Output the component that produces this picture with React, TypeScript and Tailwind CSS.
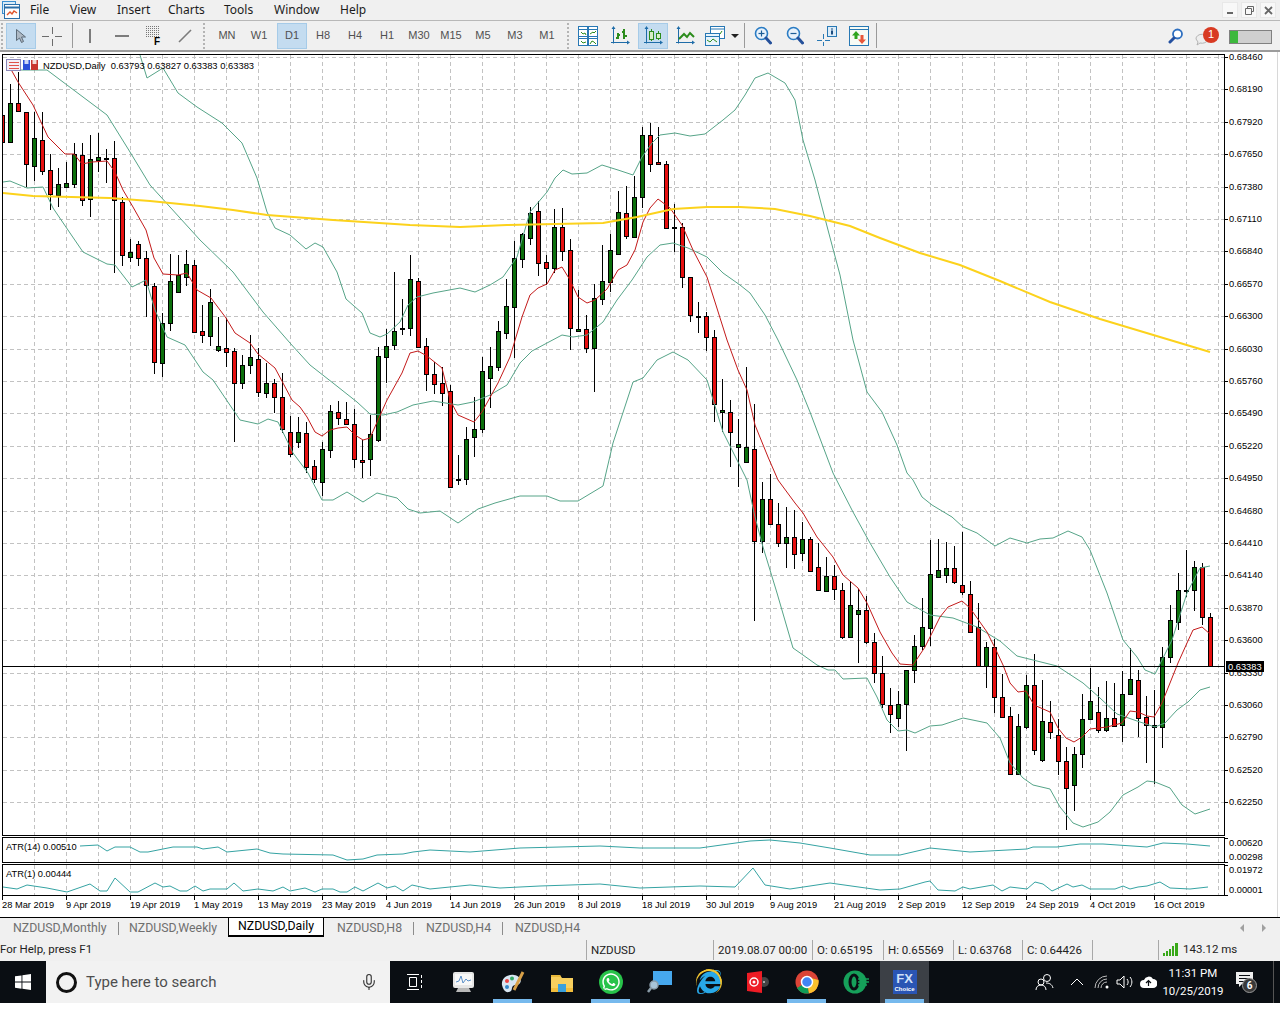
import { FaInternetExplorer, FaWhatsapp } from "react-icons/fa";
import { Mic } from "lucide-react";

type Candle = [number, "r" | "g", number, number, number, number];

// x, colour, high, body top, body bottom, low (page pixels)
const candles: Candle[] = [
  [2, "r", 100, 115, 142, 148], [10, "g", 84, 103, 142, 143], [18, "r", 72, 103, 111, 111], [26, "r", 112, 112, 164, 187],
  [34, "g", 112, 138, 166, 181], [42, "r", 112, 140, 171, 175], [50, "r", 154, 170, 194, 210], [58, "g", 168, 184, 195, 207],
  [66, "g", 162, 183, 187, 188], [74, "g", 143, 154, 184, 188], [82, "r", 143, 155, 200, 206], [90, "g", 135, 159, 199, 217],
  [98, "g", 133, 157, 160, 172], [106, "r", 149, 158, 159, 183], [114, "r", 141, 158, 200, 273], [122, "r", 197, 202, 255, 266],
  [130, "g", 239, 252, 257, 262], [138, "r", 241, 244, 258, 266], [146, "r", 251, 258, 285, 317], [154, "r", 283, 286, 362, 374],
  [162, "g", 313, 323, 363, 377], [170, "g", 254, 281, 323, 331], [178, "g", 255, 275, 292, 292], [186, "g", 250, 264, 277, 286],
  [194, "r", 260, 265, 332, 333], [202, "r", 305, 331, 335, 343], [210, "g", 289, 302, 336, 346], [218, "g", 317, 346, 350, 352],
  [226, "r", 318, 348, 352, 367], [234, "r", 348, 351, 383, 442], [242, "g", 355, 365, 383, 389], [250, "g", 335, 357, 365, 374],
  [258, "r", 348, 359, 392, 397], [266, "g", 363, 383, 393, 398], [274, "r", 379, 383, 397, 413], [282, "r", 373, 397, 429, 433],
  [290, "r", 416, 432, 454, 457], [298, "g", 417, 432, 442, 448], [306, "r", 422, 433, 467, 473], [314, "r", 460, 466, 479, 483],
  [322, "g", 442, 449, 482, 496], [330, "g", 405, 411, 450, 458], [338, "r", 401, 412, 418, 425], [346, "r", 402, 419, 424, 425],
  [354, "r", 409, 424, 459, 468], [362, "r", 440, 460, 462, 478], [370, "g", 415, 434, 459, 476], [378, "g", 347, 356, 440, 442],
  [386, "g", 329, 346, 357, 383], [394, "g", 272, 331, 345, 350], [402, "g", 299, 328, 329, 335], [410, "g", 255, 279, 328, 336],
  [418, "r", 278, 281, 347, 347], [426, "r", 338, 346, 374, 391], [434, "r", 362, 374, 384, 394], [442, "r", 367, 383, 393, 406],
  [450, "r", 385, 391, 487, 488], [458, "g", 455, 479, 480, 485], [466, "g", 427, 439, 479, 485], [474, "g", 397, 429, 437, 457],
  [482, "g", 357, 371, 429, 433], [490, "g", 347, 366, 378, 408], [498, "g", 321, 331, 367, 371], [506, "g", 279, 306, 333, 339],
  [514, "g", 241, 258, 307, 358], [522, "g", 233, 234, 259, 268], [530, "g", 207, 213, 238, 245], [538, "r", 201, 211, 263, 276],
  [546, "r", 255, 262, 268, 285], [554, "g", 209, 227, 268, 273], [562, "r", 208, 227, 251, 261], [570, "r", 239, 250, 328, 350],
  [578, "g", 290, 329, 331, 332], [586, "r", 315, 329, 348, 353], [594, "g", 284, 298, 348, 392], [602, "g", 245, 281, 299, 305],
  [610, "g", 234, 250, 282, 292], [618, "g", 191, 212, 254, 254], [626, "r", 186, 213, 236, 239], [634, "g", 176, 197, 237, 238],
  [642, "g", 127, 135, 197, 208], [650, "r", 123, 135, 164, 172], [658, "r", 127, 162, 164, 165], [666, "r", 161, 164, 228, 229],
  [674, "g", 204, 227, 228, 252], [682, "r", 223, 227, 277, 288], [690, "r", 277, 277, 315, 322], [698, "g", 302, 316, 317, 333],
  [706, "r", 312, 316, 337, 351], [714, "r", 330, 337, 404, 422], [722, "g", 379, 410, 412, 432], [730, "r", 400, 412, 432, 467],
  [738, "g", 419, 444, 447, 487], [746, "g", 367, 447, 462, 463], [754, "r", 404, 449, 541, 621], [762, "g", 482, 499, 541, 553],
  [770, "r", 474, 499, 524, 524], [778, "r", 503, 524, 543, 547], [786, "g", 507, 537, 543, 568], [794, "r", 510, 537, 554, 569],
  [802, "g", 522, 539, 553, 561], [810, "r", 537, 539, 571, 572], [818, "r", 543, 567, 590, 590], [826, "g", 557, 576, 591, 591],
  [834, "r", 565, 576, 589, 600], [842, "r", 583, 590, 637, 639], [850, "g", 582, 605, 637, 637], [858, "g", 589, 610, 614, 663],
  [866, "r", 596, 610, 642, 644], [874, "r", 633, 642, 673, 683], [882, "r", 656, 673, 704, 708], [890, "r", 688, 705, 714, 733],
  [898, "g", 691, 704, 718, 727], [906, "g", 670, 670, 704, 751], [914, "g", 635, 646, 670, 683], [922, "g", 598, 627, 646, 650],
  [930, "g", 540, 574, 628, 646], [938, "g", 539, 570, 577, 577], [946, "g", 542, 568, 575, 583], [954, "r", 546, 568, 582, 584],
  [962, "r", 532, 585, 592, 595], [970, "r", 581, 594, 632, 632], [978, "r", 603, 627, 666, 667], [986, "g", 642, 647, 666, 688],
  [994, "r", 639, 647, 697, 713], [1002, "r", 674, 697, 717, 717], [1010, "r", 707, 716, 774, 774], [1018, "g", 714, 726, 774, 774],
  [1026, "g", 675, 685, 727, 729], [1034, "r", 654, 685, 750, 755], [1042, "g", 680, 721, 760, 762], [1050, "r", 701, 722, 732, 739],
  [1058, "r", 719, 735, 761, 775], [1066, "r", 747, 761, 788, 830], [1074, "g", 747, 754, 785, 811], [1082, "g", 694, 719, 754, 768],
  [1090, "g", 668, 701, 719, 719], [1098, "r", 687, 712, 730, 733], [1106, "g", 681, 718, 730, 732], [1114, "r", 683, 718, 726, 727],
  [1122, "g", 671, 694, 725, 742], [1130, "g", 648, 679, 694, 694], [1138, "r", 670, 680, 718, 737], [1146, "r", 696, 717, 725, 763],
  [1154, "g", 690, 725, 727, 784], [1162, "g", 647, 657, 727, 748], [1170, "g", 605, 620, 657, 663], [1178, "g", 573, 590, 622, 630],
  [1186, "g", 550, 590, 591, 597], [1194, "g", 561, 567, 590, 611], [1202, "r", 563, 567, 617, 625], [1210, "r", 613, 617, 666, 666],
];

const redMa = "9,66 13,73 18,82 33,105 48,137 65,154 74,154 82,164 92,162 107,161 115,172 123,190 133,207 146,230 154,258 163,274 178,275 187,273 197,290 211,298 226,318 235,333 250,343 258,354 275,368 283,383 292,400 300,407 307,417 315,432 322,436 330,430 338,428 347,427 355,435 363,440 370,438 378,420 387,400 402,373 410,353 418,351 427,356 442,368 450,400 458,415 474,422 482,412 498,383 510,357 522,317 530,295 538,288 547,284 555,270 562,267 570,280 578,297 587,303 595,300 607,289 618,270 627,265 635,250 643,222 650,208 658,199 670,208 682,225 693,250 707,277 715,302 727,340 738,370 747,390 755,425 768,457 778,480 795,503 803,513 817,537 833,557 843,575 858,588 867,603 880,632 892,653 900,664 913,665 925,647 940,617 948,607 962,601 970,608 987,632 995,648 1003,665 1010,683 1018,692 1026,691 1034,705 1050,712 1058,728 1066,738 1074,742 1082,737 1090,729 1107,727 1122,723 1130,711 1138,712 1147,716 1154,717 1162,703 1178,663 1187,643 1193,630 1202,627 1210,634";
const upperBand = "140,55 147,78 163,68 178,93 197,107 222,123 242,143 257,178 267,212 275,228 290,235 306,249 315,243 323,247 337,272 346,299 362,313 370,333 380,337 387,334 400,322 408,305 417,297 433,293 460,288 475,292 490,285 503,277 517,257 530,212 547,192 555,178 563,170 572,174 587,173 602,165 618,170 633,175 642,157 652,143 660,135 675,133 690,136 705,134 723,120 735,110 745,95 755,78 768,73 785,83 795,100 803,140 815,180 828,230 840,275 853,340 867,392 882,412 897,445 907,473 913,480 922,497 932,505 952,517 963,527 977,533 995,546 1010,538 1027,543 1040,539 1053,538 1068,531 1082,537 1090,550 1107,593 1123,640 1137,657 1145,670 1155,674 1163,658 1172,640 1187,593 1200,568 1210,566";
const midBand = "18,70 47,70 107,115 130,152 150,185 180,218 200,240 233,272 263,312 290,343 310,365 333,383 357,402 370,414 383,415 397,412 413,405 433,401 458,405 473,402 490,395 507,385 520,363 532,351 547,343 562,335 573,337 587,335 603,322 617,300 632,280 647,257 660,245 673,243 688,248 707,257 723,273 740,285 750,293 765,315 778,340 797,380 810,412 833,473 853,512 870,543 890,577 907,602 930,615 953,618 977,627 1000,641 1017,656 1033,660 1057,666 1083,683 1100,698 1117,714 1137,721 1155,727 1165,723 1177,710 1188,702 1200,690 1210,687";
const lowerBand = "3,182 10,181 27,188 43,187 53,208 70,233 83,252 107,264 115,265 132,287 146,280 155,310 167,337 185,345 203,372 213,380 240,420 258,424 268,419 278,422 293,453 308,473 322,500 333,500 347,492 363,502 377,493 397,498 408,509 420,513 440,511 458,523 478,509 495,503 520,496 547,496 560,501 578,501 603,486 613,443 633,382 643,378 657,360 673,352 688,360 707,380 723,432 738,462 747,480 755,517 763,547 777,593 793,648 803,655 817,665 828,670 835,670 843,679 867,678 877,697 887,720 898,731 907,730 915,733 930,726 942,725 963,718 987,723 1000,738 1010,763 1023,778 1033,785 1050,789 1060,807 1073,823 1083,827 1098,822 1110,812 1123,795 1138,787 1147,781 1155,782 1170,788 1182,805 1195,814 1210,809";
const ma200 = "3,193 33,196 110,198 150,201 200,206 233,210 267,215 333,220 410,225 460,227 507,225 603,223 637,217 673,209 707,207 740,207 775,209 810,216 850,226 880,238 920,253 960,265 1000,281 1050,302 1100,319 1150,334 1210,352";
const atr14 = "80,846 98,845 107,851 115,847 130,847 140,852 148,852 163,849 173,847 197,847 203,849 218,847 227,852 257,849 270,853 283,854 333,855 347,860 363,859 377,855 403,854 413,852 430,850 470,852 520,848 600,846 640,848 700,848 750,841 770,840 800,843 830,848 870,855 900,855 930,848 970,852 1027,849 1033,847 1057,847 1080,844 1103,844 1147,847 1163,843 1187,844 1210,846";
const atr1 = "3,887 17,889 27,885 47,888 67,892 90,884 100,891 107,891 115,878 130,892 138,892 155,883 163,887 170,886 180,891 187,891 195,886 203,891 210,889 227,889 234,883 243,891 258,889 273,891 283,887 290,891 305,888 315,892 322,889 333,889 340,892 347,892 355,887 363,891 378,883 387,888 395,886 403,891 412,885 430,889 470,885 500,888 540,886 600,884 640,888 700,886 735,887 753,868 765,885 790,889 830,883 880,890 900,889 925,882 930,881 938,890 955,891 963,887 970,889 993,885 1002,891 1010,887 1027,889 1035,882 1043,884 1052,891 1067,884 1073,887 1082,885 1090,889 1115,889 1123,886 1130,889 1138,887 1147,886 1160,882 1170,888 1190,889 1208,887";

const prices = ["0.68460", "0.68190", "0.67920", "0.67650", "0.67380", "0.67110", "0.66840", "0.66570", "0.66300", "0.66030", "0.65760", "0.65490", "0.65220", "0.64950", "0.64680", "0.64410", "0.64140", "0.63870", "0.63600", "0.63330", "0.63060", "0.62790", "0.62520", "0.62250"];
const dates = ["28 Mar 2019", "9 Apr 2019", "19 Apr 2019", "1 May 2019", "13 May 2019", "23 May 2019", "4 Jun 2019", "14 Jun 2019", "26 Jun 2019", "8 Jul 2019", "18 Jul 2019", "30 Jul 2019", "9 Aug 2019", "21 Aug 2019", "2 Sep 2019", "12 Sep 2019", "24 Sep 2019", "4 Oct 2019", "16 Oct 2019"];
const gridX = Array.from({ length: 38 }, (_, i) => 34 + i * 32);

const chartFont = "font-['Liberation_Sans',sans-serif]";
const uiFont = "font-['Noto_Sans',sans-serif]";
const barFont = "font-['Roboto',sans-serif]";

function ChartSvg() {
  return (
    <svg width={1280} height={865} viewBox="0 52 1280 865" className={`block ${chartFont}`}>
      <defs>
        <clipPath id="main"><rect x={3} y={55} width={1221} height={780} /></clipPath>
      </defs>
      <g stroke="#c2c2c2" strokeDasharray="4 3" shapeRendering="crispEdges">
        {gridX.map((x) => (
          <g key={x}>
            <line x1={x + 0.5} x2={x + 0.5} y1={55} y2={835} />
            <line x1={x + 0.5} x2={x + 0.5} y1={838} y2={862} />
            <line x1={x + 0.5} x2={x + 0.5} y1={865} y2={895} />
          </g>
        ))}
        {prices.map((p, i) => {
          const y = Math.round(57 + i * 32.4) + 0.5;
          return <line key={p} x1={3} x2={1224} y1={y} y2={y} />;
        })}
      </g>

      <g clipPath="url(#main)">
        {candles.map(([x, c, h, t, b, l]) => (
          <g key={x} shapeRendering="crispEdges">
            <line x1={x + 0.5} x2={x + 0.5} y1={h} y2={l} stroke="#000" />
            <rect
              x={x - 1.5}
              y={t + 0.5}
              width={4}
              height={Math.max(b - t, 1)}
              fill={c === "r" ? "#e60f0f" : "#0b6f0b"}
              stroke="#000"
            />
          </g>
        ))}
        <polyline points={upperBand} fill="none" stroke="#56a488" />
        <polyline points={midBand} fill="none" stroke="#56a488" />
        <polyline points={lowerBand} fill="none" stroke="#56a488" />
        <polyline points={redMa} fill="none" stroke="#c31a1a" />
        <polyline points={ma200} fill="none" stroke="#fcd21c" strokeWidth={2} />
      </g>

      <g shapeRendering="crispEdges" stroke="#000" fill="none">
        <line x1={3} x2={1224} y1={666.5} y2={666.5} />
        <rect x={2.5} y={54.5} width={1222} height={781} />
        <rect x={2.5} y={837.5} width={1222} height={25} />
        <rect x={2.5} y={864.5} width={1222} height={31} />
        {prices.map((p, i) => {
          const y = Math.round(57 + i * 32.4) + 0.5;
          return <line key={p} x1={1224} x2={1228} y1={y} y2={y} />;
        })}
        <line x1={1224} x2={1228} y1={838.5} y2={838.5} />
        <line x1={1224} x2={1228} y1={862.5} y2={862.5} />
        <line x1={1224} x2={1228} y1={865.5} y2={865.5} />
        <line x1={1224} x2={1228} y1={895.5} y2={895.5} />
        {dates.map((d, i) => (
          <line key={d} x1={2.5 + i * 64} x2={2.5 + i * 64} y1={896} y2={900} />
        ))}
      </g>

      <polyline points={atr14} fill="none" stroke="#35a3a3" />
      <polyline points={atr1} fill="none" stroke="#35a3a3" />

      <g fontSize={9.3} fill="#000">
        {prices.map((p, i) => (
          <text key={p} x={1229} y={Math.round(57 + i * 32.4) + 2.5}>{p}</text>
        ))}
        <text x={1229} y={845.5}>0.00620</text>
        <text x={1229} y={859.5}>0.00298</text>
        <text x={1229} y={872.5}>0.01972</text>
        <text x={1229} y={892.5}>0.00001</text>
        {dates.map((d, i) => (
          <text key={d} x={2 + i * 64} y={907.5}>{d}</text>
        ))}
        <text x={6} y={850}>ATR(14) 0.00510</text>
        <text x={6} y={877}>ATR(1) 0.00444</text>
        <text x={43} y={69} fontSize={9.4}>NZDUSD,Daily&#160;&#160;0.63793 0.63827 0.63383 0.63383</text>
      </g>

      <rect x={1226} y={661} width={38} height={11} fill="#000" />
      <text x={1228} y={670} fontSize={9.3} fill="#fff">0.63383</text>

      <rect x={6.5} y={59.5} width={14} height={11} fill="#f3eef4" stroke="#8a88b8" />
      <g stroke="#e0524a" shapeRendering="crispEdges">
        <line x1={9} x2={19} y1={62.5} y2={62.5} />
        <line x1={9} x2={19} y1={65.5} y2={65.5} />
        <line x1={9} x2={19} y1={68.5} y2={68.5} />
      </g>
      <rect x={23} y={60} width={7} height={10} fill="#2c50d8" />
      <rect x={24.5} y={60} width={4} height={4} fill="#cfd8f5" />
      <rect x={31} y={60} width={7} height={10} fill="#c8362e" />
      <rect x={32.5} y={60} width={4} height={4} fill="#f3dcd8" />

      <line x1={1277.5} x2={1277.5} y1={52} y2={917} stroke="#d8d8d8" />
    </svg>
  );
}

function Gripper() {
  return <div className="h-[26px] w-[4px] mx-[1px] border-l-2 border-dotted border-[#b4b4b4]" />;
}

function Sep() {
  return <div className="h-[25px] w-px bg-[#9a9a9a]" />;
}

function ToolBtn({ active, children, className = "" }: { active?: boolean; children: React.ReactNode; className?: string }) {
  return (
    <div
      className={`flex h-[26px] items-center justify-center ${active ? "border border-[#a6cbe8] bg-[#c4dcf0]" : ""} ${className}`}
    >
      {children}
    </div>
  );
}

const Axes = () => (
  <g stroke="#1e6ca8" fill="#1e6ca8" strokeWidth={1}>
    <line x1={3.5} x2={3.5} y1={2} y2={17.5} />
    <line x1={1} x2={19} y1={16.5} y2={16.5} />
    <path d="M3.5 0l-2 3h4z M20 16.5l-3-2v4z" stroke="none" />
  </g>
);

function GridIcon() {
  return (
    <svg width={20} height={20}>
      <rect x={0.5} y={0.5} width={19} height={19} fill="#fff" stroke="#2878b4" />
      <path d="M0 3.5h20M0 10.5h20M0 12.5h20M9.5 0v20M10.5 0v20" stroke="#2878b4" fill="none" />
      <path d="M3 6l2 2 2-1 1 2M12 8l3-2 1 1 2-2M3 15l2 2 3-1M12 18l2-3 2 1 2 2" stroke="#2c8c1c" fill="none" />
    </svg>
  );
}

function BarsIcon() {
  return (
    <svg width={20} height={20}>
      <Axes />
      <path d="M8 7v6M6 12h2M8 9h2M14 3v10M12 6h2M14 10h3" stroke="#2c8c1c" strokeWidth={2} fill="none" />
    </svg>
  );
}

function CandlesIcon() {
  return (
    <svg width={20} height={20}>
      <Axes />
      <path d="M8.5 3v12M15.5 5v9" stroke="#2c8c1c" />
      <rect x={6.5} y={5.5} width={4} height={8} fill="#d8ecc8" stroke="#2c8c1c" />
      <rect x={13.5} y={7.5} width={4} height={5} fill="#d8ecc8" stroke="#2c8c1c" />
    </svg>
  );
}

function LineIcon() {
  return (
    <svg width={20} height={20}>
      <Axes />
      <polyline points="4,13 9,8 12,11 15,7 19,11" stroke="#2c8c1c" strokeWidth={2} fill="none" />
    </svg>
  );
}

function TemplatesIcon() {
  return (
    <svg width={20} height={20}>
      <rect x={5.5} y={0.5} width={14} height={12} fill="#fff" stroke="#2878b4" />
      <path d="M5 3h15" stroke="#2878b4" />
      <path d="M12 9l3-1 2-3" stroke="#2c8c1c" fill="none" />
      <rect x={0.5} y={7.5} width={14} height={12} fill="#e8f4fc" stroke="#2878b4" />
      <path d="M0 10.5h15" stroke="#2878b4" />
      <path d="M2 14l3 2 3-3 4 3" stroke="#2c8c1c" fill="none" />
    </svg>
  );
}

function ZoomIcon({ plus }: { plus?: boolean }) {
  return (
    <svg width={18} height={20}>
      <circle cx={7.5} cy={7.5} r={6} fill="#e8f2fb" stroke="#2a7cc4" strokeWidth={1.6} />
      <path d="M4.5 7.5h6" stroke="#1d5d96" strokeWidth={1.2} />
      {plus && <path d="M7.5 4.5v6" stroke="#1d5d96" strokeWidth={1.2} />}
      <path d="M12 12l4.5 5" stroke="#24509a" strokeWidth={3} strokeLinecap="round" />
    </svg>
  );
}

function CrossInfoIcon() {
  return (
    <svg width={20} height={20}>
      <path d="M0 14.5h5M8 14.5h5M6.5 8v5M6.5 16v4" stroke="#2878b4" />
      <rect x={10.5} y={0.5} width={9} height={10} fill="#dcecf8" stroke="#2878b4" />
      <path d="M15 2.5v1M15 4.5v4" stroke="#1d4d80" strokeWidth={2} />
    </svg>
  );
}

function ArrowsIcon() {
  return (
    <svg width={20} height={20}>
      <rect x={0.5} y={0.5} width={19} height={19} fill="#f7fbf5" stroke="#2878b4" />
      <path d="M0 3.5h20" stroke="#2878b4" />
      <path d="M7 5l4 4.5H8.5V13h-3V9.5H3z" fill="#2fa51e" />
      <path d="M13 18l-4-4.5h2.5V9h3v4.500H17z" fill="#e8573a" />
    </svg>
  );
}

function Toolbar() {
  const frames = ["MN", "W1", "D1", "H8", "H4", "H1", "M30", "M15", "M5", "M3", "M1"];
  return (
    <div className="flex h-[32px] items-center border-t border-b-2 border-t-[#b8b8b8] border-b-[#9c9c9c] bg-[#f0f0f0]">
      <Gripper />
      <ToolBtn active className="w-[30px]">
        <svg width={14} height={16}><path d="M2.500 1.500v11l3-2.500 2 4.500 2-1-2-4.500h4z" fill="#aeb9c4" stroke="#5d6b78" /></svg>
      </ToolBtn>
      <ToolBtn className="w-[32px]">
        <svg width={20} height={20}><path d="M0 10.500h7M13 10.500h7M10.500 1v7M10.500 13v7" stroke="#6c6c6c" /></svg>
      </ToolBtn>
      <div className="ml-[4px] mr-[1px]"><Sep /></div>
      <ToolBtn className="w-[32px]"><div className="h-[14px] w-[2px] bg-[#7c7c7c]" /></ToolBtn>
      <ToolBtn className="w-[32px]"><div className="h-[2px] w-[14px] bg-[#7c7c7c]" /></ToolBtn>
      <ToolBtn className="w-[30px]">
        <div className="relative h-[20px] w-[14px]">
          <svg width={14} height={12} className="absolute left-0 top-0">
            <g stroke="#777" strokeDasharray="1 1">
              <path d="M0 .5h14M0 2.500h14M0 4.500h14M0 6.500h14M0 8.500h14M0 10.500h14" />
            </g>
          </svg>
          <span className="absolute bottom-0 right-0 font-['Liberation_Sans',sans-serif] text-[10px] leading-[9px] font-bold text-black">F</span>
        </div>
      </ToolBtn>
      <ToolBtn className="w-[34px]">
        <svg width={14} height={14}><path d="M1 13L13 1" stroke="#7c7c7c" strokeWidth={1.6} /></svg>
      </ToolBtn>
      <Gripper />
      <div className={`ml-[3px] flex text-[11px] text-[#505050] ${chartFont}`}>
        {frames.map((f) => (
          <ToolBtn key={f} active={f === "D1"} className={f === "D1" ? "ml-[2px] w-[30px]" : "w-[32px]"}>{f}</ToolBtn>
        ))}
      </div>
      <div className="ml-[3px]"><Gripper /></div>
      <ToolBtn className="w-[32px]"><GridIcon /></ToolBtn>
      <ToolBtn className="w-[32px]"><BarsIcon /></ToolBtn>
      <ToolBtn active className="ml-[2px] w-[30px]"><CandlesIcon /></ToolBtn>
      <ToolBtn className="ml-[1px] w-[32px]"><LineIcon /></ToolBtn>
      <ToolBtn className="w-[28px]"><TemplatesIcon /></ToolBtn>
      <div className="ml-[2px] mr-[5px] h-0 w-0 border-x-[4px] border-t-[4px] border-x-transparent border-t-[#222]" />
      <Sep />
      <ToolBtn className="ml-[1px] w-[33px]"><ZoomIcon plus /></ToolBtn>
      <ToolBtn className="w-[32px]"><ZoomIcon /></ToolBtn>
      <ToolBtn className="w-[32px]"><CrossInfoIcon /></ToolBtn>
      <ToolBtn className="w-[32px]"><ArrowsIcon /></ToolBtn>
      <div className="ml-px"><Sep /></div>
      <div className="ml-auto mr-[8px] flex items-center">
        <svg width={16} height={16} className="mr-[7px]">
          <circle cx={9.5} cy={6} r={4.500} fill="#fff" stroke="#2d6fc0" strokeWidth={1.8} />
          <path d="M6 10l-4 4" stroke="#2450a0" strokeWidth={3} strokeLinecap="round" />
        </svg>
        <div className="relative mr-[18px] h-[20px] w-[20px]">
          <svg width={14} height={14} className="absolute left-[4px] top-[7px]">
            <path d="M1 6a6 4.500 0 1 1 4 4l-3 2 1-3z" fill="#eee" stroke="#b4b4b4" />
          </svg>
          <div className={`absolute left-[12px] top-[1px] flex h-[16px] w-[16px] items-center justify-center rounded-full bg-[#d83a22] text-[11px] text-white ${chartFont}`}>1</div>
        </div>
        <div className="mt-[2px] h-[14px] w-[43px] border border-[#808080] bg-[#cfcfcf]">
          <div className="h-full w-[8px] bg-[#3cb83c]" />
        </div>
      </div>
    </div>
  );
}

function MenuBar() {
  const menus: [string, string][] = [["File", "w-[40px]"], ["View", "w-[47px]"], ["Insert", "w-[51px]"], ["Charts", "w-[56px]"], ["Tools", "w-[50px]"], ["Window", "w-[66px]"], ["Help", "w-[40px]"]];
  return (
    <div className={`flex h-[20px] items-center bg-[#f0f0f0] text-[12px] text-[#1c1c1c] ${uiFont}`}>
      <svg width={18} height={18} className="ml-[2px] mr-[10px]">
        <rect x={0.5} y={0.5} width={13} height={12} fill="#d9ebf8" stroke="#3b8fd0" />
        <rect x={2.5} y={3.5} width={15} height={14} fill="#fdfdfd" stroke="#2b6ea8" />
        <path d="M3 6.500h14" stroke="#2b6ea8" strokeWidth={2} />
        <path d="M5 14l3-3 2 2 2-3 3 2" stroke="#e0532a" fill="none" strokeWidth={1.4} />
      </svg>
      {menus.map(([m, w]) => (
        <span key={m} className={w}>{m}</span>
      ))}
      <div className="ml-auto mr-[4px] flex gap-[3px]">
        <div className="flex h-[16px] w-[16px] items-end justify-center border border-[#e8e8e8] bg-[#f8f8f8] pb-[3px]">
          <div className="h-[2px] w-[6px] bg-[#666]" />
        </div>
        <div className="flex h-[16px] w-[16px] items-center justify-center border border-[#e8e8e8] bg-[#f8f8f8]">
          <svg width={9} height={9}><path d="M2.500 2.500v-2h6v5h-2M.5 2.500h6v6h-6z" fill="none" stroke="#666" /></svg>
        </div>
        <div className="flex h-[16px] w-[16px] items-center justify-center border border-[#e8e8e8] bg-[#f8f8f8]">
          <svg width={9} height={9}><path d="M1 1l7 7M8 1l-7 7" stroke="#666" strokeWidth={1.8} /></svg>
        </div>
      </div>
    </div>
  );
}

function TabBar() {
  const cell = "flex h-[20px] items-center text-[#6f6f6f] whitespace-nowrap";
  const sep = "ml-auto h-[13px] w-px bg-[#8c8c8c]";
  return (
    <div className={`relative flex h-[21px] border-t border-black bg-[#f0f0f0] text-[12.3px] ${barFont}`}>
      <div className={`${cell} w-[119px] pl-[13px]`}>NZDUSD,Monthly<div className={sep} /></div>
      <div className={`${cell} w-[109px] pl-[10px]`}>NZDUSD,Weekly</div>
      <div className="-mt-px flex h-[20px] w-[96px] items-center justify-center border-x border-t border-b-2 border-black bg-white text-black">NZDUSD,Daily</div>
      <div className={`${cell} w-[90px] pl-[13px]`}>NZDUSD,H8<div className={sep} /></div>
      <div className={`${cell} w-[89px] pl-[12px]`}>NZDUSD,H4<div className={sep} /></div>
      <div className={`${cell} pl-[12px]`}>NZDUSD,H4</div>
      <div className="ml-auto mr-[14px] flex h-[20px] items-center gap-[18px]">
        <div className="h-0 w-0 border-y-[4px] border-r-[4px] border-y-transparent border-r-[#a0a0a0]" />
        <div className="h-0 w-0 border-y-[4px] border-l-[4px] border-y-transparent border-l-[#a0a0a0]" />
      </div>
    </div>
  );
}

function StatusBar() {
  const cells: [string, string][] = [["NZDUSD", "w-[127px]"], ["2019.08.07 00:00", "w-[99px]"], ["O: 0.65195", "w-[71px]"], ["H: 0.65569", "w-[70px]"], ["L: 0.63768", "w-[69px]"], ["C: 0.64426", "w-[70px]"]];
  return (
    <div className={`flex h-[23px] items-center bg-[#f0f0f0] text-[11.5px] text-[#222] ${barFont}`}>
      <div className="w-[586px]">For Help, press F1</div>
      {cells.map(([t, w]) => (
        <div key={t} className={`h-[20px] ${w} whitespace-nowrap border-l border-[#a8a8a8] pl-[4px] leading-[20px]`}>{t}</div>
      ))}
      <div className="h-[20px] w-[66px] border-l border-[#a8a8a8]" />
      <div className="flex h-[20px] items-center gap-[5px] whitespace-nowrap border-l border-[#a8a8a8] pl-[4px]">
        <svg width={15} height={13}>
          <path d="M0 13v-3h2v3zM3 13V8h2v5zM6 13V6h2v7zM9 13V3h2v10zM12 13V0h3v13z" fill="#38a818" />
        </svg>
        143.12 ms
      </div>
    </div>
  );
}

function TaskIcon({ active, highlight, children }: { active?: boolean; highlight?: boolean; children: React.ReactNode }) {
  return (
    <div className={`relative flex h-[42px] w-[49px] items-center justify-center ${highlight ? "bg-[#3c4046]" : ""}`}>
      {children}
      {active && <div className="absolute bottom-0 left-[5px] right-[5px] h-[4px] bg-[#76b9ed]" />}
    </div>
  );
}

function Taskbar() {
  return (
    <div className={`flex h-[42px] bg-[#0a0e13] text-white ${barFont}`}>
      <div className="flex w-[46px] items-center justify-center">
        <svg width={16} height={16}>
          <path d="M0 2.300l6.500-.9v6.200H0zM7.400 1.300L16 0v7.600H7.400zM0 8.500h6.500v6.200L0 13.700zM7.400 8.500H16V16l-8.600-1.200z" fill="#fff" />
        </svg>
      </div>
      <div className="flex w-[344px] items-center bg-[#f2f2f2] pl-[10px] text-[15px] text-[#4e4e4e]">
        <div className="mr-[9px] h-[21px] w-[21px] rounded-full border-[3px] border-[#111]" />
        <span>Type here to search</span>
        <Mic size={18} className="ml-auto mr-[12px] text-[#333]" strokeWidth={1.5} />
      </div>
      <div className="flex w-[49px] items-center justify-center">
        <svg width={16} height={16}>
          <path d="M0 .5h12M2.500 3.500h7v9h-7zM0 15.500h12M14.500 1v3M14.500 6v3M14.500 11v3" stroke="#fff" fill="none" />
        </svg>
      </div>
      <TaskIcon>
        <svg width={24} height={24}>
          <rect x={1} y={2} width={21} height={16} rx={2} fill="#e6e6e6" />
          <rect x={3} y={4} width={17} height={11} fill="#f8f8f8" />
          <path d="M4 12l3-1 2-5 2 7 3-4 2 2 3-1" stroke="#5a8fc8" fill="none" />
          <path d="M6 18h11l2 4H4z" fill="#b8b8b8" />
        </svg>
      </TaskIcon>
      <TaskIcon active>
        <svg width={26} height={26}>
          <path d="M2 16C1 9 8 5 14 6c6 1 8 5 6 8s-5 1-7 3 0 5-4 6-6-3-7-7z" fill="#d8e6f2" />
          <circle cx={7} cy={12} r={2} fill="#e44" />
          <circle cx={12} cy={9.500} r={2} fill="#3a6" />
          <circle cx={7} cy={18} r={2} fill="#38c" />
          <path d="M14 21L23 3" stroke="#d8a048" strokeWidth={3} />
        </svg>
      </TaskIcon>
      <TaskIcon>
        <svg width={24} height={22}>
          <path d="M1 4h9l2 3h11v14H1z" fill="#f7cf5e" />
          <path d="M1 4h9l1 2H1z" fill="#e8b83a" />
          <rect x={1} y={17} width={22} height={4} fill="#f2bd3c" />
          <rect x={8} y={13} width={8} height={8} fill="#3aa0dc" />
        </svg>
      </TaskIcon>
      <TaskIcon active>
        <FaWhatsapp size={24} className="rounded-full bg-[#28c34a] p-[2px] text-white" />
      </TaskIcon>
      <TaskIcon>
        <svg width={26} height={24}>
          <rect x={6} y={1} width={19} height={14} fill="#46a8ee" />
          <circle cx={7} cy={15} r={4} fill="#a8c4d8" stroke="#8a9ca8" strokeWidth={1.5} />
          <path d="M4 18l-3 4" stroke="#8a9ca8" strokeWidth={2.500} />
        </svg>
      </TaskIcon>
      <TaskIcon>
        <div className="relative">
          <FaInternetExplorer size={24} className="text-[#28a8e8]" />
          <div className="absolute left-[-1px] top-[-1px] h-[26px] w-[26px] -rotate-[25deg] rounded-full border-t-2 border-r-2 border-t-[#f2c530] border-r-[#f2c530]" />
        </div>
      </TaskIcon>
      <TaskIcon>
        <svg width={26} height={24}>
          <circle cx={19} cy={12} r={5} fill="#444" />
          <circle cx={19} cy={12} r={1} fill="#ccc" />
          <path d="M2 3l15-2v22L2 21z" fill="#ee1c25" />
          <circle cx={9} cy={12} r={4} fill="none" stroke="#fff" strokeWidth={1.5} />
          <circle cx={9} cy={12} r={1.500} fill="#fff" />
        </svg>
      </TaskIcon>
      <TaskIcon active>
        <svg width={24} height={24} viewBox="0 0 24 24">
          <circle cx={12} cy={12} r={11.500} fill="#db4437" />
          <path d="M12 12L2 18A11.500 11.500 0 0 0 14 23.300z" fill="#0f9d58" />
          <path d="M12 12L14 23.300A11.500 11.500 0 0 0 23.500 10L12 7z" fill="#fbc02d" />
          <circle cx={12} cy={12} r={5.500} fill="#4285f4" stroke="#fff" strokeWidth={1.500} />
        </svg>
      </TaskIcon>
      <TaskIcon>
        <svg width={26} height={24}>
          <circle cx={12} cy={12} r={11.500} fill="#16a05a" />
          <ellipse cx={11} cy={12} rx={4} ry={7} fill="none" stroke="#0a0e13" strokeWidth={3} />
          <path d="M15 9h11M15 12h11M15 15h9" stroke="#16a05a" strokeWidth={1.500} />
        </svg>
      </TaskIcon>
      <TaskIcon active highlight>
        <div className="flex h-[24px] w-[24px] flex-col items-center justify-center bg-[#2a55b4] font-['Liberation_Sans',sans-serif] font-bold text-[#cfe0f8]">
          <span className="text-[13px] leading-[14px]">FX</span>
          <span className="text-[6px] leading-[7px] text-white">Choice</span>
        </div>
      </TaskIcon>
      <div className="ml-auto flex items-center">
        <svg width={20} height={18} className="mr-[15px]">
          <circle cx={12} cy={5} r={3.500} fill="none" stroke="#fff" />
          <circle cx={6} cy={9} r={3} fill="none" stroke="#fff" />
          <path d="M1 17c0-3 2-5 5-5s5 2 5 5M11 10c3 0 6 1 7 5" fill="none" stroke="#fff" />
        </svg>
        <svg width={14} height={8} className="mr-[10px]"><path d="M1 7l6-6 6 6" stroke="#fff" fill="none" /></svg>
        <svg width={16} height={14} className="mr-[6px]">
          <path d="M1 13A12 12 0 0 1 13 1M4 13A9 9 0 0 1 13 4M7 13a6 6 0 0 1 6-6" stroke="#bbb" fill="none" />
          <circle cx={13} cy={12} r={1.500} fill="#fff" />
        </svg>
        <svg width={18} height={14} className="mr-[6px]">
          <path d="M1 5h3l4-4v12l-4-4H1zM11 4c1.500 2 1.500 4 0 6M14 2c2.500 3 2.500 7 0 10" stroke="#fff" fill="none" />
        </svg>
        <svg width={17} height={12} className="mr-[1px]">
          <path d="M4 12a4 4 0 0 1 0-8 5 5 0 0 1 9-1 4.500 4.500 0 0 1 0 9z" fill="#fff" />
          <path d="M8.500 10V5M6 7l2.500-2.500L11 7" stroke="#0a0e13" fill="none" strokeWidth={1.2} />
        </svg>
        <div className="flex w-[70px] flex-col items-center text-[11.5px] leading-[18px]">
          <span>11:31 PM</span>
          <span>10/25/2019</span>
        </div>
        <div className="relative ml-[8px] mr-[19px] h-[20px] w-[18px]">
          <svg width={17} height={15} className="absolute left-0 top-0">
            <path d="M0 0h17v12H6l-3 3v-3H0z" fill="#eee" />
            <path d="M3 3.500h11M3 6.500h11M3 9.500h7" stroke="#0a0e13" />
          </svg>
          <div className="absolute left-[6px] top-[6px] flex h-[15px] w-[15px] items-center justify-center rounded-full border border-[#999] bg-[#3a3a3a] text-[10px] font-bold text-white">6</div>
        </div>
        <div className="mr-[6px] h-[42px] w-px bg-[#555]" />
      </div>
    </div>
  );
}

export default function App() {
  return (
    <div className="h-[1024px] w-[1280px] overflow-hidden bg-white">
      <MenuBar />
      <Toolbar />
      <ChartSvg />
      <TabBar />
      <StatusBar />
      <Taskbar />
    </div>
  );
}
